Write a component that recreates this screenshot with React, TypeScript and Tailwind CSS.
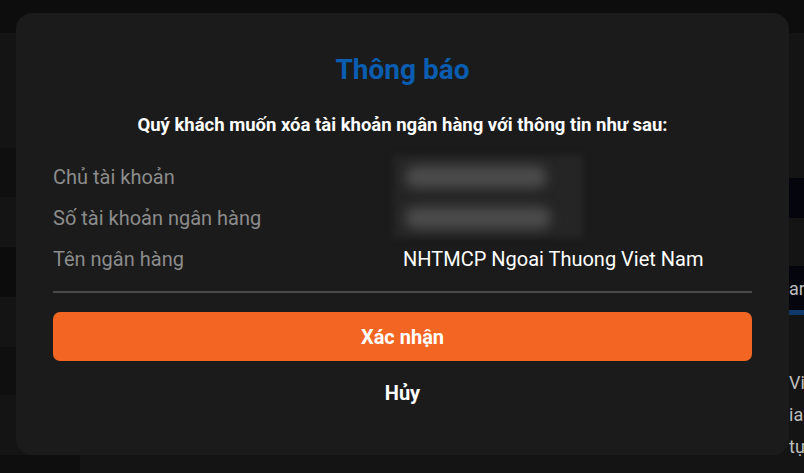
import React from "react";

export default function App() {
  return (
    <div
      className="relative w-[804px] h-[473px] overflow-hidden bg-[#141414]"
      style={{ fontFamily: "Roboto, 'Noto Sans', sans-serif" }}
    >
      {/* background page */}
      <div className="flex flex-col h-full">
        <div className="h-[33px] bg-[#0d0d0d]" />
        <div className="flex flex-1">
          <div className="w-[16px] flex flex-col">
            <div className="h-[115px]" />
            <div className="h-[49px] bg-[#0f0f0f]" />
            <div className="h-[50px]" />
            <div className="h-[50px] bg-[#0c0c0c]" />
            <div className="h-[50px]" />
            <div className="h-[48px] bg-[#0f0f0f]" />
            <div className="flex-1" />
            <div className="h-[18px] w-[80px] bg-[#0e0e0e]" />
          </div>
          <div className="flex-1" />
          <div className="w-[15px] flex flex-col text-[#bdbdbd] text-[18px] overflow-hidden">
            <div className="h-[145px]" />
            <div className="h-[40px] bg-[#05050d]" />
            <div className="h-[48px]" />
            <div className="h-[44px] bg-[#05050d] flex items-center whitespace-nowrap">
              ar
            </div>
            <div className="h-[5px] bg-[#0e3a6b]" />
            <div className="h-[52px]" />
            <div className="whitespace-nowrap leading-[32px]">Việc</div>
            <div className="whitespace-nowrap leading-[32px]">iam</div>
            <div className="whitespace-nowrap leading-[32px]">tự</div>
          </div>
        </div>
      </div>

      {/* modal */}
      <div className="absolute left-[16px] top-[13px] w-[773px] h-[442px] rounded-[16px] bg-[#1b1b1b] px-[37px] pt-[38px]">
        <h1 className="text-center text-[28px] font-bold text-[#0a5db0] leading-[38px]">
          Thông báo
        </h1>
        <p className="mt-[24px] text-center text-[18.5px] font-bold text-white leading-[24px] whitespace-nowrap">
          Quý khách muốn xóa tài khoản ngân hàng với thông tin như sau:
        </p>
        <div className="mt-[27px] flex">
          <div className="w-[350px] flex flex-col gap-[15px] text-[20px] leading-[26px] text-[#8c8c8c]">
            <span>Chủ tài khoản</span>
            <span>Số tài khoản ngân hàng</span>
            <span>Tên ngân hàng</span>
          </div>
          <div className="flex flex-col gap-[15px] text-[20px] leading-[26px]">
            <div className="relative h-[26px]">
              <div className="absolute -left-[10px] -top-[9px] w-[190px] h-[83px]">
                <div className="absolute inset-0 bg-[#252525] blur-[3px]" />
                <div className="absolute left-[12px] top-[11px] w-[142px] h-[22px] rounded-full bg-[#4b4b4b] blur-[6px]" />
                <div className="absolute left-[12px] top-[52px] w-[146px] h-[22px] rounded-full bg-[#4b4b4b] blur-[6px]" />
              </div>
            </div>
            <div className="h-[26px]" />
            <span className="text-white whitespace-nowrap">NHTMCP Ngoai Thuong Viet Nam</span>
          </div>
        </div>
        <div className="mt-[19px] h-[2px] bg-[#4a4a4a]" />
        <button className="mt-[19px] w-full h-[49px] rounded-[7px] bg-[#f26522] text-white text-[20px] font-bold">
          Xác nhận
        </button>
        <div className="mt-[19px] text-center text-white text-[20px] font-bold leading-[26px]">
          Hủy
        </div>
      </div>
    </div>
  );
}
